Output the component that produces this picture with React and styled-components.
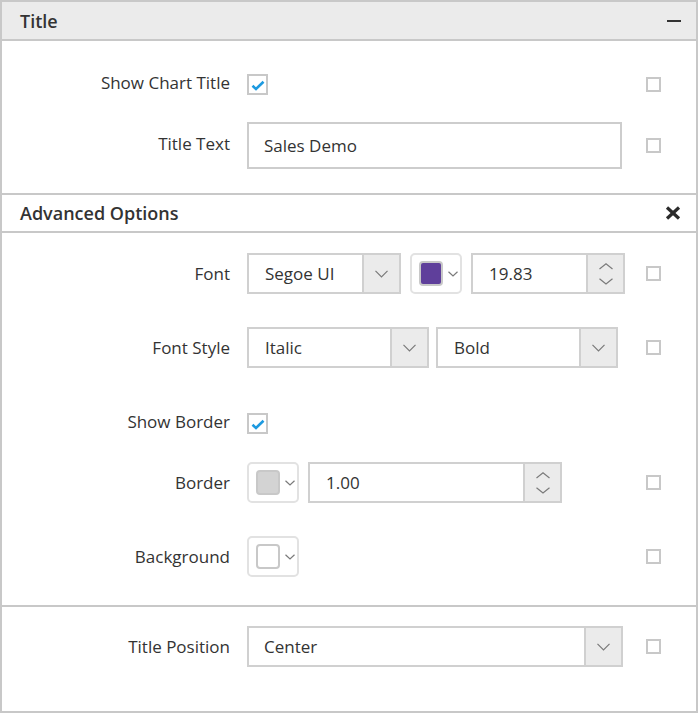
import React from 'react';
import styled, { createGlobalStyle } from 'styled-components';

const GlobalStyle = createGlobalStyle`
  html, body {
    margin: 0;
    padding: 0;
    background: #fff;
  }
  body {
    font-family: "Open Sans", "Noto Sans", "DejaVu Sans", sans-serif;
    color: #333;
  }
`;

const Panel = styled.div`
  width: 698px;
  height: 713px;
  box-sizing: border-box;
  border: 2px solid #c8c8c8;
  background: #fff;
  display: flex;
  flex-direction: column;
`;

const SectionHeader = styled.div`
  display: flex;
  align-items: center;
  justify-content: space-between;
  height: ${props => props.$height}px;
  padding: 0 15px 0 18px;
  background: ${props => props.$shaded ? '#ebebeb' : '#fff'};
  border-top: ${props => props.$topBorder ? '2px solid #c8c8c8' : 'none'};
  border-bottom: 2px solid #c8c8c8;
  font-size: 18px;
  font-weight: 600;
  color: #333;
`;

const HeaderIcon = styled.svg`
  display: block;
`;

const Section = styled.div`
  padding: ${props => props.$top}px 0 ${props => props.$bottom}px;
  border-top: ${props => props.$topBorder ? '2px solid #c8c8c8' : 'none'};
  flex: ${props => props.$fill ? 1 : 'none'};
`;

const Row = styled.div`
  display: grid;
  grid-template-columns: 228px 1fr 15px;
  column-gap: 17px;
  align-items: center;
  height: ${props => props.$h}px;
  margin-top: ${props => props.$mt || 0}px;
  padding-right: 35px;
`;

const Label = styled.div`
  text-align: right;
  font-size: 17px;
  color: #333;
  margin-top: ${props => props.$shift || 0}px;
`;

const Controls = styled.div`
  display: flex;
  align-items: center;
  gap: ${props => props.$gap || 0}px;
`;

const TextInput = styled.div`
  box-sizing: border-box;
  width: ${props => props.$w}px;
  height: 47px;
  border: 2px solid #cdcdcd;
  padding-left: 15px;
  display: flex;
  align-items: center;
  font-size: 17px;
  color: #333;
`;

const Box = styled.div`
  box-sizing: border-box;
  width: ${props => props.$w}px;
  height: 41px;
  border: 2px solid #d0d0d0;
  display: flex;
  align-items: stretch;
  background: #fff;
`;

const BoxText = styled.div`
  flex: 1;
  display: flex;
  align-items: center;
  padding-left: ${props => props.$pl || 15}px;
  font-size: 17px;
  color: #333;
`;

const DropButton = styled.div`
  width: 35px;
  background: #ebebeb;
  border-left: 2px solid #d0d0d0;
  display: flex;
  flex-direction: column;
  align-items: center;
  justify-content: center;
  gap: ${props => props.$gap || 0}px;
`;

const ColorPicker = styled.div`
  box-sizing: border-box;
  width: 52px;
  height: 41px;
  border: 2px solid #e2e2e2;
  border-radius: 5px;
  display: flex;
  align-items: center;
  padding-left: 7px;
  gap: 5px;
`;

const Swatch = styled.div`
  box-sizing: border-box;
  width: 24px;
  height: 25px;
  border: 2px solid #c8c8c8;
  border-radius: 4px;
  background: ${props => props.$color};
`;

const CheckBox = styled.div`
  box-sizing: border-box;
  width: 21px;
  height: 21px;
  border: 2px solid #c8c8c8;
  display: flex;
  align-items: center;
  justify-content: center;
`;

const SmallCheck = styled.div`
  box-sizing: border-box;
  width: 15px;
  height: 15px;
  border: 2px solid #c8c8c8;
`;

const Chevron = ({ w = 13, h = 7, up = false }) => (
  <svg width={w} height={h + 1} viewBox={`0 0 ${w} ${h + 1}`} style={{ display: 'block' }}>
    <polyline
      points={up ? `0.5,${h} ${w / 2},0.8 ${w - 0.5},${h}` : `0.5,0.8 ${w / 2},${h} ${w - 0.5},0.8`}
      fill="none"
      stroke="#7a7a7a"
      strokeWidth="1.2"
    />
  </svg>
);

const Tick = () => (
  <svg width="14" height="11" viewBox="0 0 14 11" style={{ display: 'block', marginTop: 2 }}>
    <polyline points="1.5,5.8 5,9 12.5,1.8" fill="none" stroke="#1d9ae0" strokeWidth="2.6" />
  </svg>
);

const Select = ({ w, value, pl }) => (
  <Box $w={w}>
    <BoxText $pl={pl}>{value}</BoxText>
    <DropButton>
      <Chevron />
    </DropButton>
  </Box>
);

const Numeric = ({ w, value }) => (
  <Box $w={w}>
    <BoxText $pl={16}>{value}</BoxText>
    <DropButton $gap={8}>
      <Chevron w={14} h={6} up />
      <Chevron w={14} h={6} />
    </DropButton>
  </Box>
);

const Color = ({ color }) => (
  <ColorPicker>
    <Swatch $color={color} />
    <Chevron w={10} h={5} />
  </ColorPicker>
);

const App = () => (
  <>
    <GlobalStyle />
    <Panel>
      <SectionHeader $height={37} $shaded>
        <span>Title</span>
        <HeaderIcon width="14" height="14" viewBox="0 0 14 14">
          <line x1="0" y1="7" x2="14" y2="7" stroke="#333" strokeWidth="2" />
        </HeaderIcon>
      </SectionHeader>
      <Section $top={33} $bottom={24}>
        <Row $h={21}>
          <Label $shift={-4}>Show Chart Title</Label>
          <Controls>
            <CheckBox><Tick /></CheckBox>
          </Controls>
          <SmallCheck />
        </Row>
        <Row $h={47} $mt={27}>
          <Label $shift={-5}>Title Text</Label>
          <Controls>
            <TextInput $w={375}>Sales Demo</TextInput>
          </Controls>
          <SmallCheck />
        </Row>
      </Section>
      <SectionHeader $height={36} $topBorder>
        <span>Advanced Options</span>
        <HeaderIcon width="16" height="14" viewBox="0 0 16 14">
          <line x1="2" y1="1.5" x2="14" y2="12.5" stroke="#2b2b2b" strokeWidth="3.2" />
          <line x1="14" y1="1.5" x2="2" y2="12.5" stroke="#2b2b2b" strokeWidth="3.2" />
        </HeaderIcon>
      </SectionHeader>
      <Section $top={20} $bottom={28}>
        <Row $h={41}>
          <Label>Font</Label>
          <Controls $gap={9}>
            <Select w={154} value="Segoe UI" pl={16} />
            <Color color="#5f3f9b" />
            <Numeric w={154} value="19.83" />
          </Controls>
          <SmallCheck />
        </Row>
        <Row $h={41} $mt={33}>
          <Label>Font Style</Label>
          <Controls $gap={7}>
            <Select w={182} value="Italic" pl={16} />
            <Select w={182} value="Bold" pl={16} />
          </Controls>
          <SmallCheck />
        </Row>
        <Row $h={21} $mt={45}>
          <Label $shift={-4}>Show Border</Label>
          <Controls>
            <CheckBox><Tick /></CheckBox>
          </Controls>
          <span />
        </Row>
        <Row $h={41} $mt={28}>
          <Label>Border</Label>
          <Controls $gap={9}>
            <Color color="#d3d3d3" />
            <Numeric w={254} value="1.00" />
          </Controls>
          <SmallCheck />
        </Row>
        <Row $h={41} $mt={33}>
          <Label>Background</Label>
          <Controls>
            <Color color="#fff" />
          </Controls>
          <SmallCheck />
        </Row>
      </Section>
      <Section $top={19} $bottom={0} $topBorder $fill>
        <Row $h={41}>
          <Label>Title Position</Label>
          <Controls>
            <Select w={376} value="Center" pl={15} />
          </Controls>
          <SmallCheck />
        </Row>
      </Section>
    </Panel>
  </>
);

export default App;
